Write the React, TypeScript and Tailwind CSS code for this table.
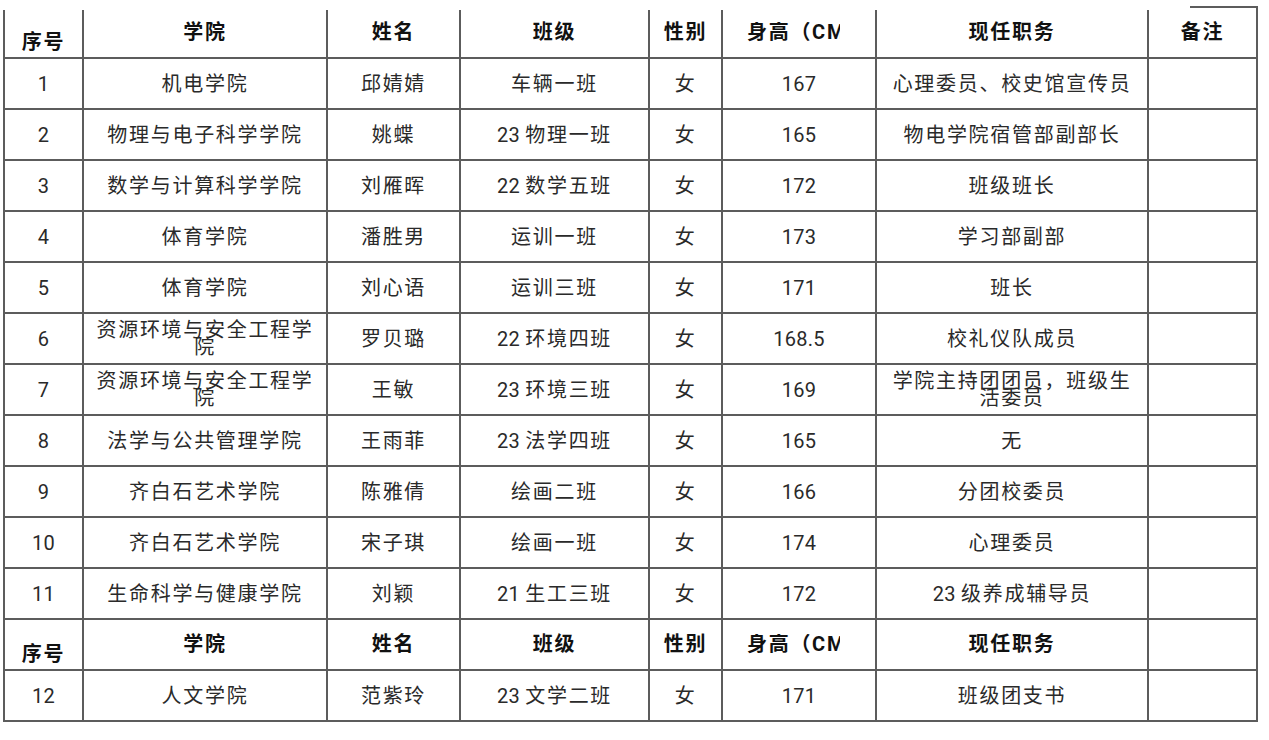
import React from 'react'

// column widths measured between grid lines
const COLS = ['w-[79px]', 'w-[244px]', 'w-[133px]', 'w-[189px]', 'w-[73px]', 'w-[154px]', 'w-[272px]', 'w-[109px]']

type Row = {
  no: string
  college: string[]
  name: string
  klass: string
  sex: string
  height: string
  duty: string[]
}

const ROWS: Row[] = [
  { no: '1', college: ['机电学院'], name: '邱婧婧', klass: '车辆一班', sex: '女', height: '167', duty: ['心理委员、校史馆宣传员'] },
  { no: '2', college: ['物理与电子科学学院'], name: '姚蝶', klass: '23 物理一班', sex: '女', height: '165', duty: ['物电学院宿管部副部长'] },
  { no: '3', college: ['数学与计算科学学院'], name: '刘雁晖', klass: '22 数学五班', sex: '女', height: '172', duty: ['班级班长'] },
  { no: '4', college: ['体育学院'], name: '潘胜男', klass: '运训一班', sex: '女', height: '173', duty: ['学习部副部'] },
  { no: '5', college: ['体育学院'], name: '刘心语', klass: '运训三班', sex: '女', height: '171', duty: ['班长'] },
  { no: '6', college: ['资源环境与安全工程学', '院'], name: '罗贝璐', klass: '22 环境四班', sex: '女', height: '168.5', duty: ['校礼仪队成员'] },
  { no: '7', college: ['资源环境与安全工程学', '院'], name: '王敏', klass: '23 环境三班', sex: '女', height: '169', duty: ['学院主持团团员，班级生', '活委员'] },
  { no: '8', college: ['法学与公共管理学院'], name: '王雨菲', klass: '23 法学四班', sex: '女', height: '165', duty: ['无'] },
  { no: '9', college: ['齐白石艺术学院'], name: '陈雅倩', klass: '绘画二班', sex: '女', height: '166', duty: ['分团校委员'] },
  { no: '10', college: ['齐白石艺术学院'], name: '宋子琪', klass: '绘画一班', sex: '女', height: '174', duty: ['心理委员'] },
  { no: '11', college: ['生命科学与健康学院'], name: '刘颖', klass: '21 生工三班', sex: '女', height: '172', duty: ['23 级养成辅导员'] },
]

const LAST: Row = { no: '12', college: ['人文学院'], name: '范紫玲', klass: '23 文学二班', sex: '女', height: '171', duty: ['班级团支书'] }

const cell = 'border-2 border-[#5c5c5c] text-center align-middle p-0'
const head = 'border-2 border-[#5c5c5c] text-center align-bottom p-0 font-bold text-[#111] leading-[20px]'

// digits sit tighter than the CJK glyphs in the source document
function Txt({ s }: { s: string }) {
  const parts = s.split(/([0-9.]+ ?)/).filter(Boolean)
  return (
    <>
      {parts.map((p, i) =>
        /[0-9]/.test(p) ? (
          <span key={i} className="tracking-[0.3px]">{p}</span>
        ) : (
          <span key={i}>{p}</span>
        ),
      )}
    </>
  )
}

function Lines({ lines }: { lines: string[] }) {
  if (lines.length === 1) return <Txt s={lines[0]} />
  return (
    <div className="leading-[17px] pt-[1px]">
      {lines.map((l, i) => (
        <div key={i}>{l}</div>
      ))}
    </div>
  )
}

function HeaderRow({ first }: { first?: boolean }) {
  const h = first ? 'h-[48px] border-t-0' : 'h-[51px]'
  return (
    <tr>
      <th className={`${head} ${h} pb-[5px]`}>序号</th>
      <th className={`${head} ${h} pb-[15px]`}>学院</th>
      <th className={`${head} ${h} pb-[15px]`}>姓名</th>
      <th className={`${head} ${h} pb-[15px]`}>班级</th>
      <th className={`${head} ${h} pb-[15px]`}>性别</th>
      <th className={`${head} ${h} pb-[15px] text-left pl-[24px]`}>
        <span className="inline-block w-[93px] overflow-hidden whitespace-nowrap align-bottom">身高（CM</span>
      </th>
      <th className={`${head} ${h} pb-[15px]`}>现任职务</th>
      <th className={`${head} ${h} pb-[15px] relative`}>
        {first && (
          <>
            备注
            <span className="absolute top-[-4px] left-[41px] right-[-2px] h-[5px] border-t-2 border-r-2 border-[#5c5c5c]" />
          </>
        )}
      </th>
    </tr>
  )
}

function DataRow({ r }: { r: Row }) {
  return (
    <tr className="h-[51px]">
      <td className={cell}><Txt s={r.no} /></td>
      <td className={cell}><Lines lines={r.college} /></td>
      <td className={cell}>{r.name}</td>
      <td className={cell}><Txt s={r.klass} /></td>
      <td className={cell}>{r.sex}</td>
      <td className={cell}><Txt s={r.height} /></td>
      <td className={cell}><Lines lines={r.duty} /></td>
      <td className={cell}></td>
    </tr>
  )
}

export default function App() {
  return (
    <div
      className="w-[1269px] h-[740px] bg-white overflow-hidden pt-[10px] pl-[3px] text-[20px] tracking-[1.7px] text-[#2a2a2a]"
      style={{ fontFamily: 'Roboto, "Noto Sans CJK SC", sans-serif' }}
    >
      <table className="table-fixed border-collapse w-[1255px]">
        <colgroup>
          {COLS.map((w, i) => (
            <col key={i} className={w} />
          ))}
        </colgroup>
        <tbody>
          <HeaderRow first />
          {ROWS.map(r => (
            <DataRow key={r.no} r={r} />
          ))}
          <HeaderRow />
          <DataRow r={LAST} />
        </tbody>
      </table>
    </div>
  )
}
